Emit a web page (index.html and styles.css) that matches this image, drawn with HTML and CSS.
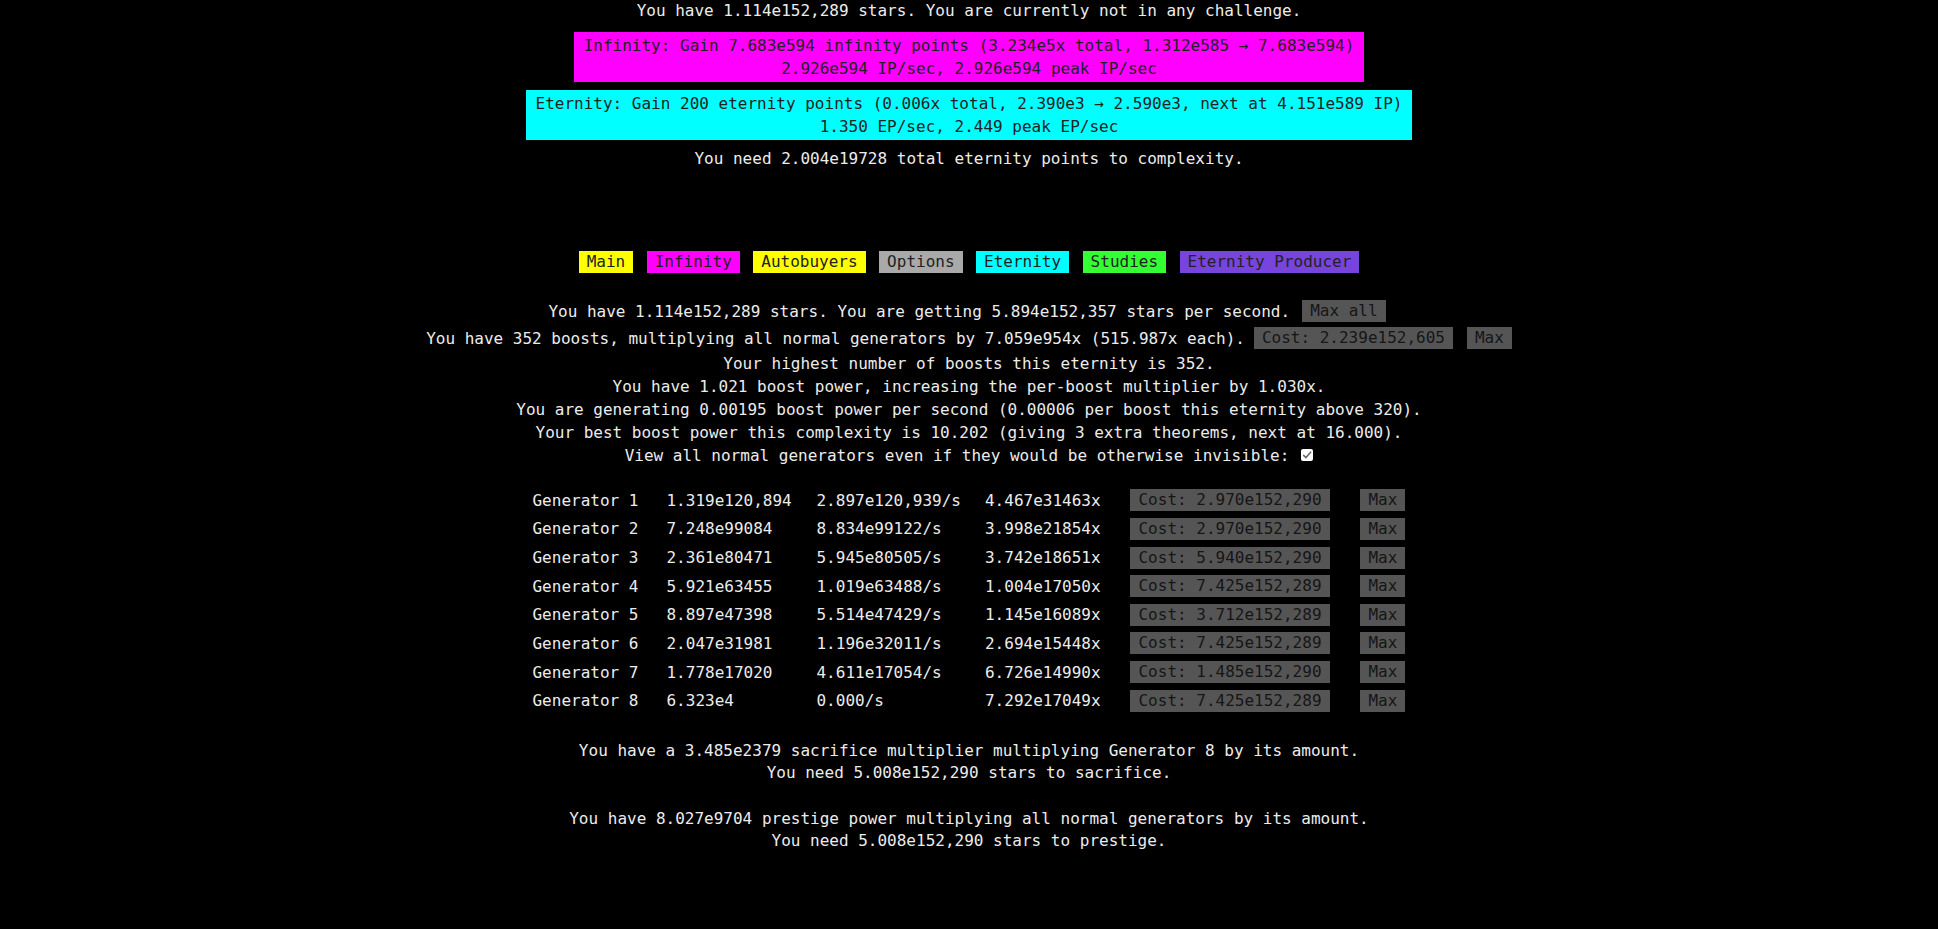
FILE: index.html
```html
<!DOCTYPE html>
<html lang="en">
<head>
<meta charset="utf-8">
<title>Game</title>
<link rel="stylesheet" href="styles.css">
</head>
<body>
<div class="page">
  <div class="top-line">You have 1.114e152,289 stars. You are currently not in any challenge.</div>
  <div class="reset-box infinity-box">
    <div>Infinity: Gain 7.683e594 infinity points (3.234e5x total, 1.312e585 → 7.683e594)</div>
    <div>2.926e594 IP/sec, 2.926e594 peak IP/sec</div>
  </div>
  <div class="reset-box eternity-box">
    <div>Eternity: Gain 200 eternity points (0.006x total, 2.390e3 → 2.590e3, next at 4.151e589 IP)</div>
    <div>1.350 EP/sec, 2.449 peak EP/sec</div>
  </div>
  <div class="need-line">You need 2.004e19728 total eternity points to complexity.</div>

  <nav class="tabs">
    <span class="tab tab-yellow">Main</span>
    <span class="tab tab-magenta">Infinity</span>
    <span class="tab tab-yellow">Autobuyers</span>
    <span class="tab tab-gray">Options</span>
    <span class="tab tab-cyan">Eternity</span>
    <span class="tab tab-green">Studies</span>
    <span class="tab tab-purple">Eternity Producer</span>
  </nav>

  <section class="main-tab">
    <div class="btn-row row-stars">
      <span>You have 1.114e152,289 stars. You are getting 5.894e152,357 stars per second.</span>
      <button class="btn">Max all</button>
    </div>
    <div class="btn-row row-boosts">
      <span>You have 352 boosts, multiplying all normal generators by 7.059e954x (515.987x each).</span>
      <button class="btn">Cost: 2.239e152,605</button>
      <button class="btn btn-max">Max</button>
    </div>
    <div class="line">Your highest number of boosts this eternity is 352.</div>
    <div class="line">You have 1.021 boost power, increasing the per-boost multiplier by 1.030x.</div>
    <div class="line">You are generating 0.00195 boost power per second (0.00006 per boost this eternity above 320).</div>
    <div class="line">Your best boost power this complexity is 10.202 (giving 3 extra theorems, next at 16.000).</div>
    <div class="line check-line">
      <span>View all normal generators even if they would be otherwise invisible:</span>
      <span class="checkbox"><svg viewBox="0 0 12 12" width="12" height="12"><path d="M2.6 6.3 L5 8.6 L9.6 3.2" fill="none" stroke="#6b6b6b" stroke-width="1.6" stroke-linecap="round" stroke-linejoin="round"/></svg></span>
    </div>

    <div class="gen-table">
      <div class="gen-row"><span>Generator 1</span><span>1.319e120,894</span><span>2.897e120,939/s</span><span>4.467e31463x</span><button class="btn">Cost: 2.970e152,290</button><button class="btn">Max</button></div>
      <div class="gen-row"><span>Generator 2</span><span>7.248e99084</span><span>8.834e99122/s</span><span>3.998e21854x</span><button class="btn">Cost: 2.970e152,290</button><button class="btn">Max</button></div>
      <div class="gen-row"><span>Generator 3</span><span>2.361e80471</span><span>5.945e80505/s</span><span>3.742e18651x</span><button class="btn">Cost: 5.940e152,290</button><button class="btn">Max</button></div>
      <div class="gen-row"><span>Generator 4</span><span>5.921e63455</span><span>1.019e63488/s</span><span>1.004e17050x</span><button class="btn">Cost: 7.425e152,289</button><button class="btn">Max</button></div>
      <div class="gen-row"><span>Generator 5</span><span>8.897e47398</span><span>5.514e47429/s</span><span>1.145e16089x</span><button class="btn">Cost: 3.712e152,289</button><button class="btn">Max</button></div>
      <div class="gen-row"><span>Generator 6</span><span>2.047e31981</span><span>1.196e32011/s</span><span>2.694e15448x</span><button class="btn">Cost: 7.425e152,289</button><button class="btn">Max</button></div>
      <div class="gen-row"><span>Generator 7</span><span>1.778e17020</span><span>4.611e17054/s</span><span>6.726e14990x</span><button class="btn">Cost: 1.485e152,290</button><button class="btn">Max</button></div>
      <div class="gen-row"><span>Generator 8</span><span>6.323e4</span><span>0.000/s</span><span>7.292e17049x</span><button class="btn">Cost: 7.425e152,289</button><button class="btn">Max</button></div>
    </div>

    <div class="info-block sacrifice-block">
      <div class="info-line">You have a 3.485e2379 sacrifice multiplier multiplying Generator 8 by its amount.</div>
      <div class="info-line">You need 5.008e152,290 stars to sacrifice.</div>
    </div>
    <div class="info-block prestige-block">
      <div class="info-line">You have 8.027e9704 prestige power multiplying all normal generators by its amount.</div>
      <div class="info-line">You need 5.008e152,290 stars to prestige.</div>
    </div>
  </section>
</div>
</body>
</html>
```

FILE: styles.css
```css
html, body {
  margin: 0;
  padding: 0;
  background: #000;
}

body {
  color: #ececec;
  font-family: "DejaVu Sans Mono", "Liberation Mono", monospace;
  font-size: 16px;
  line-height: 23px;
}

.page {
  display: flex;
  flex-direction: column;
  align-items: center;
  width: 1938px;
  white-space: nowrap;
}

.top-line {
  line-height: 20px;
  padding-top: 1px;
}

.reset-box {
  padding: 2px 10px;
  line-height: 23px;
  text-align: center;
  color: #222;
}

.infinity-box {
  margin-top: 11px;
  background: #ff00ff;
}

.eternity-box {
  margin-top: 8px;
  background: #00ffff;
}

.need-line {
  margin-top: 7px;
}

.tabs {
  margin-top: 81px;
  display: flex;
  gap: 13.5px;
}

.tab {
  padding: 2px 8px;
  line-height: 18px;
  color: #222;
}

.tab-yellow { background: #ffff00; }
.tab-magenta { background: #ff00ff; }
.tab-gray { background: #a9a9a9; }
.tab-cyan { background: #00ffff; }
.tab-green { background: #33ff33; }
.tab-purple { background: #7744dd; }

.main-tab {
  margin-top: 24.5px;
  display: flex;
  flex-direction: column;
  align-items: center;
}

.btn {
  font-family: inherit;
  font-size: 16px;
  line-height: 18px;
  padding: 2px 8px;
  margin: 0;
  border: none;
  border-radius: 0;
  background: #555;
  color: #161616;
  white-space: nowrap;
  text-align: left;
}

.btn-row {
  display: flex;
  align-items: center;
  height: 27px;
}

.row-stars {
  gap: 12px;
  padding-left: 4px;
  padding-right: 8px;
}

.row-boosts {
  gap: 9px;
}

.row-boosts .btn-max {
  margin-left: 5px;
}

.line {
  line-height: 23px;
}

.check-line {
  display: flex;
  align-items: center;
  gap: 12px;
  height: 23px;
}

.checkbox {
  width: 12px;
  height: 12px;
  background: #fff;
  border-radius: 2px;
  display: flex;
}

.gen-table {
  margin-top: 19.5px;
  display: grid;
  grid-template-columns: 134px 150px 168.5px 145.5px 230px 45px;
  grid-auto-rows: 28.63px;
}

.gen-row {
  display: contents;
}

.gen-row > span,
.gen-row > .btn {
  align-self: center;
}

.gen-row > .btn {
  justify-self: start;
}

.info-block {
  display: flex;
  flex-direction: column;
  align-items: center;
}

.sacrifice-block {
  margin-top: 25px;
}

.prestige-block {
  margin-top: 24px;
}

.info-line {
  line-height: 22px;
}
```
